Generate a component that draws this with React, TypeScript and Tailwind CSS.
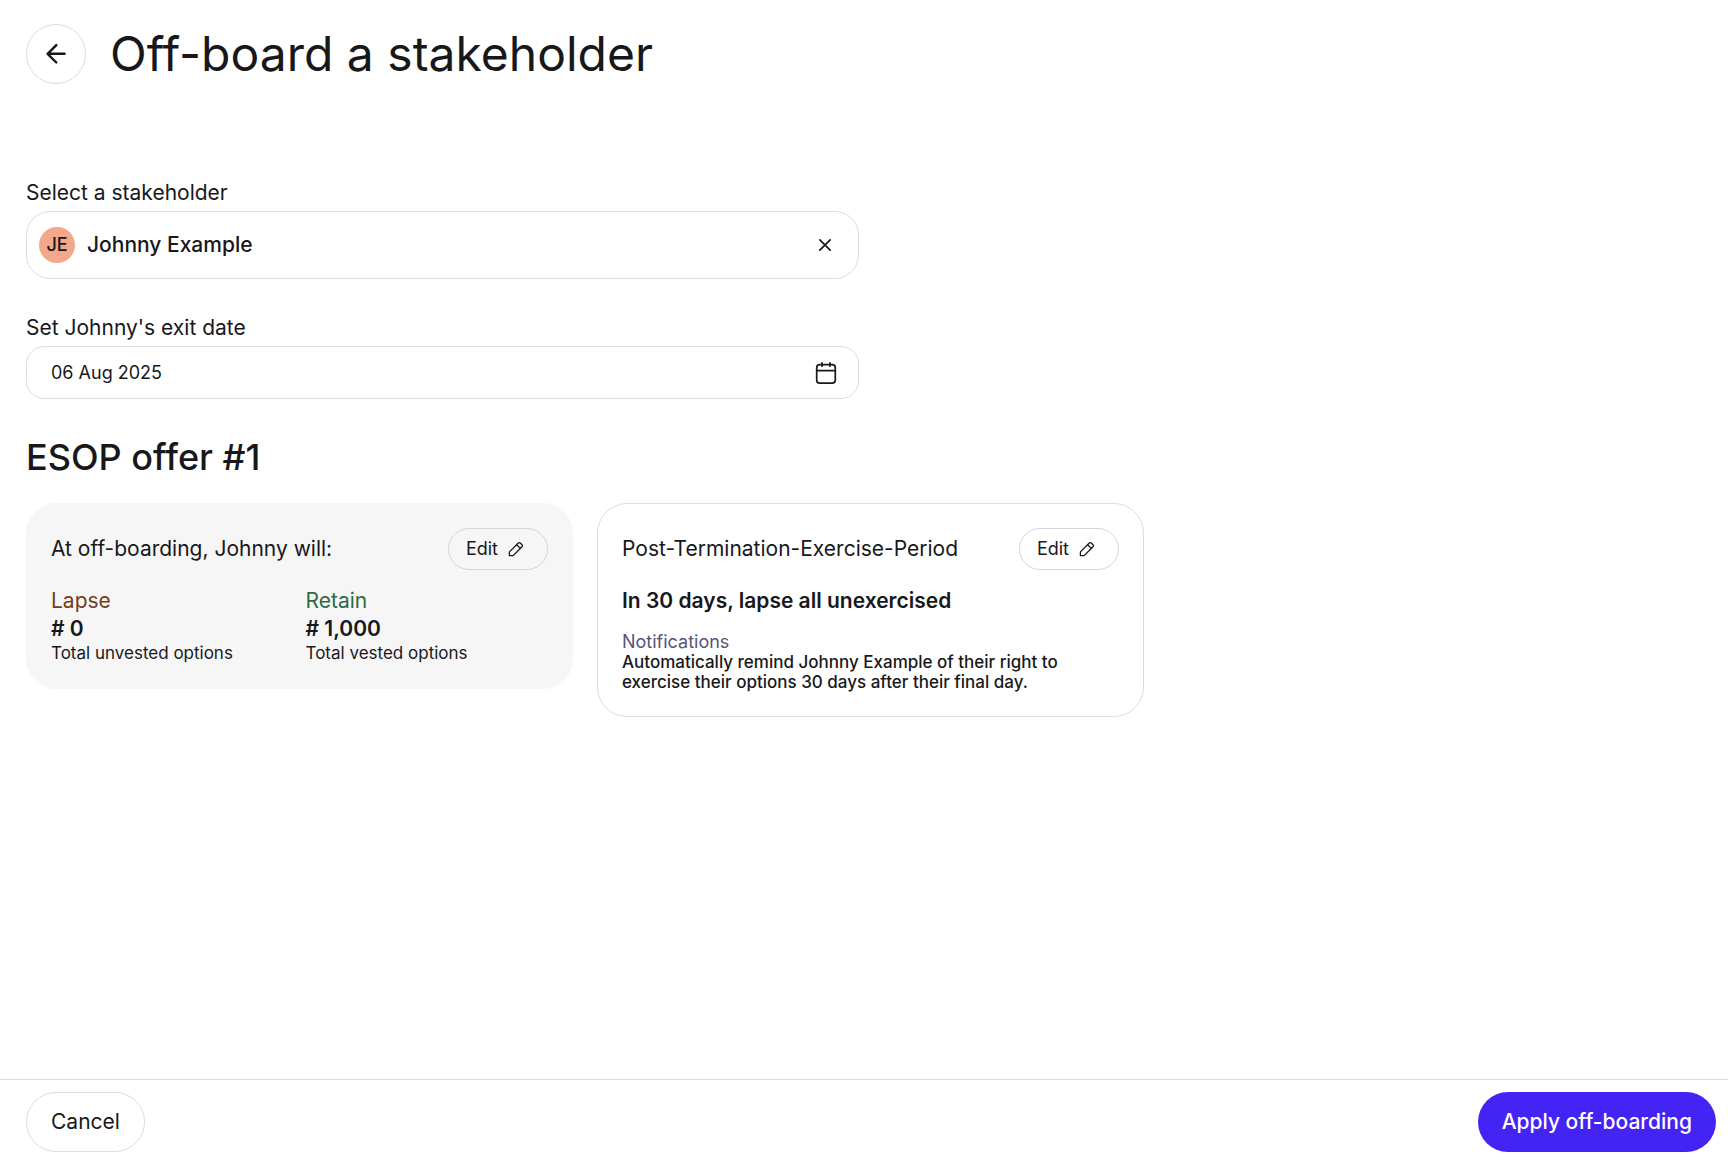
import React from 'react';

function ArrowLeftIcon() {
  return (
    <svg width="24" height="24" viewBox="0 0 24 24" fill="none" stroke="currentColor" strokeWidth="2.4" strokeLinecap="round" strokeLinejoin="round" aria-hidden="true">
      <path d="M20.6 11.8H3.6M12.3 3.1L3.6 11.8L12.3 20.5" />
    </svg>
  );
}

function CloseIcon() {
  return (
    <svg width="16" height="16" viewBox="0 0 16 16" fill="none" stroke="currentColor" strokeWidth="1.7" strokeLinecap="round" aria-hidden="true">
      <path d="M2.8 2.8L13.2 13.2M13.2 2.8L2.8 13.2" />
    </svg>
  );
}

function CalendarIcon() {
  return (
    <svg width="24" height="24" viewBox="0 0 24 24" fill="none" stroke="currentColor" strokeWidth="1.7" strokeLinecap="round" strokeLinejoin="round" aria-hidden="true">
      <rect x="2.7" y="3.7" width="18.6" height="18.4" rx="3.2" />
      <path d="M2.7 9.6H21.3M8 1.9V5.2M16 1.9V5.2" />
    </svg>
  );
}

function PencilIcon() {
  return (
    <svg width="16" height="16" viewBox="0 0 16 16" fill="none" stroke="currentColor" strokeWidth="1.3" strokeLinecap="round" strokeLinejoin="round" aria-hidden="true">
      <path d="M1.4 14.6V10.9L10.3 2C10.9 1.4 11.7 1.4 12.3 2L14 3.7C14.6 4.3 14.6 5.1 14 5.7L5.1 14.6H1.4ZM8.6 3.7L12.3 7.4" />
    </svg>
  );
}

function EditButton({ label }: { label: string }) {
  return (
    <button type="button" aria-label={label} className="flex h-[42px] shrink-0 items-center gap-2.5 rounded-full border border-[#d5d5de] pl-[17px] pr-[23px] text-lg">
      Edit
      <PencilIcon />
    </button>
  );
}

function OptionTotal({ title, amount, caption, color }: { title: string; amount: string; caption: string; color: string }) {
  return (
    <div>
      <p className={`text-[21px] leading-7 ${color}`}>{title}</p>
      <p className="text-[21px] font-semibold leading-7"># {amount}</p>
      <p className="text-[17px] leading-[21px]">{caption}</p>
    </div>
  );
}

export default function App() {
  return (
    <div className="flex min-h-screen flex-col bg-white font-['Inter',sans-serif] text-[#18181b]">
      <header className="flex items-center gap-6 px-[26px] pt-6">
        <button type="button" aria-label="Go back" className="flex size-[60px] shrink-0 items-center justify-center rounded-full border border-[#dcdce2]">
          <ArrowLeftIcon />
        </button>
        <h1 className="text-5xl leading-[60px]">Off-board a stakeholder</h1>
      </header>

      <main className="flex-1 px-[26px] pt-[95px] pb-8">
        <div className="max-w-[833px]">
          <p id="stakeholder-label" className="text-[21px] leading-7">Select a stakeholder</p>
          <div role="group" aria-labelledby="stakeholder-label" className="mt-1 flex h-[68px] items-center rounded-3xl border border-[#dcdce2] pl-3 pr-[25px]">
            <span className="flex size-9 items-center justify-center rounded-full bg-[#f3a88b] text-lg font-medium">JE</span>
            <span className="ml-3 text-[21px] font-medium">Johnny Example</span>
            <button type="button" aria-label="Clear stakeholder" className="ml-auto">
              <CloseIcon />
            </button>
          </div>

          <label htmlFor="exit-date" className="mt-[35px] block text-[21px] leading-7">Set Johnny's exit date</label>
          <div className="mt-1 flex h-[53px] items-center rounded-[18px] border border-[#dcdce2] pl-6 pr-5">
            <input id="exit-date" type="text" defaultValue="06 Aug 2025" className="min-w-0 flex-1 bg-transparent text-lg outline-none" />
            <button type="button" aria-label="Open calendar">
              <CalendarIcon />
            </button>
          </div>
        </div>

        <h2 className="mt-9 text-4xl font-medium leading-[44px]">ESOP offer #1</h2>

        <div className="mt-6 grid max-w-[1118px] grid-cols-2 items-start gap-6">
          <section className="rounded-[30px] bg-[#f6f6f6] p-[25px]">
            <div className="flex items-center justify-between gap-4">
              <h3 className="text-[21px]">At off-boarding, Johnny will:</h3>
              <EditButton label="Edit off-boarding options" />
            </div>
            <div className="mt-[17px] grid grid-cols-2 gap-3">
              <OptionTotal title="Lapse" amount="0" caption="Total unvested options" color="text-[#6f4020]" />
              <OptionTotal title="Retain" amount="1,000" caption="Total vested options" color="text-[#2e6b3f]" />
            </div>
          </section>

          <section className="rounded-[30px] border border-[#dcdce2] p-6">
            <div className="flex items-center justify-between gap-4">
              <h3 className="text-[21px]">Post-Termination-Exercise-Period</h3>
              <EditButton label="Edit exercise period" />
            </div>
            <p className="mt-[17px] text-[21px] font-semibold leading-7">In 30 days, lapse all unexercised</p>
            <p className="mt-[17px] text-lg leading-5 text-[#57537a]">Notifications</p>
            <p className="max-w-[460px] text-[17px] font-medium leading-5">
              Automatically remind Johnny Example of their right to exercise their options 30 days after their final day.
            </p>
          </section>
        </div>
      </main>

      <footer className="flex items-center justify-between border-t border-[#dcdce0] pt-3 pr-3 pb-1.5 pl-[26px]">
        <button type="button" className="h-[60px] rounded-full border border-[#dcdce2] px-6 text-[21px]">Cancel</button>
        <button type="button" className="h-[60px] rounded-full bg-[#4324f5] px-6 text-[21px] font-medium text-white">Apply off-boarding</button>
      </footer>
    </div>
  );
}
